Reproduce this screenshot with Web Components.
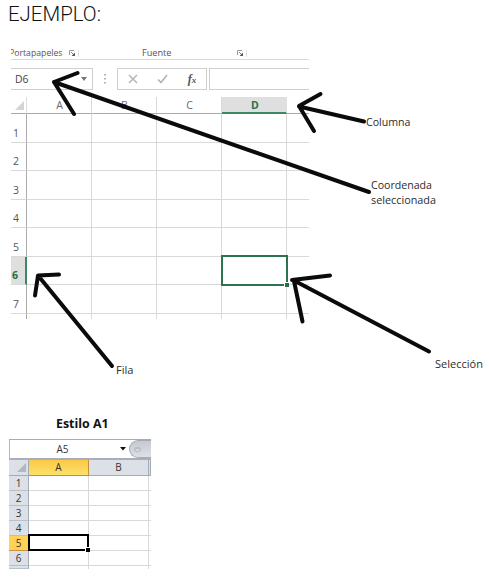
<!DOCTYPE html>
<html lang="es"><head><meta charset="utf-8"><title>Ejemplo</title>
<style>
html,body{margin:0;background:#fff}
body{width:489px;height:577px;overflow:hidden;position:relative;display:flex;flex-direction:column;align-items:flex-start;font-family:"Open Sans","Noto Sans",sans-serif}
page-title{margin:2px 0 0 8px}
sheet-modern{margin:20px 0 0 11px}
sheet-caption{margin:96px 0 0 56px}
sheet-classic{margin:7px 0 0 9px}
</style></head><body>
<page-title><fit-text w="93">EJEMPLO:</fit-text></page-title>
<sheet-modern cell="D6"></sheet-modern>
<sheet-caption><fit-text w="52.500">Estilo A1</fit-text></sheet-caption>
<sheet-classic cell="A5"></sheet-classic>
<arrow-layer>
<call-out style="left:366px;top:114px"><fit-text w="44.500">Columna</fit-text></call-out>
<call-out style="left:370.500px;top:177px"><fit-text w="61">Coordenada</fit-text><fit-text w="65">seleccionada</fit-text></call-out>
<call-out style="left:435px;top:356px"><fit-text w="48">Selección</fit-text></call-out>
<call-out style="left:116px;top:362px"><fit-text w="17.500">Fila</fit-text></call-out>
</arrow-layer>
<script>
const define=(name,render)=>customElements.define(name,class extends HTMLElement{
  connectedCallback(){ if(this.shadowRoot)return; this.attachShadow({mode:'open'}).innerHTML=render(this); }
});
define('page-title',()=>`<style>:host{display:block;height:25px;font:300 20.5px/25px Roboto,sans-serif;color:#111}</style><slot></slot>`);
define('sheet-caption',()=>`<style>:host{display:block;height:17px;font:700 12px/18px "Open Sans",sans-serif;color:#111}</style><slot></slot>`);
define('call-out',()=>`<style>:host{position:absolute;display:block;font:11.3px/15px "Open Sans",sans-serif;color:#2c2c2c}</style><slot></slot>`);
define('launcher-icon',()=>`<style>:host{display:block;width:10px;height:7px}svg{display:block}</style><svg width="10" height="7"><path d="M.5 5V.5H5" fill="none" stroke="#999"/><path d="M2 2l3 3" stroke="#888"/><path d="M6 2.500V6H2.500z" fill="#555"/><path d="M9.500 0v7" stroke="#ddd"/></svg>`);
define('ribbon-strip',()=>`<style>
:host{display:grid;grid-template-columns:58px 10px 63px 95px 72px;height:12px;align-items:center;border-bottom:1px solid #d9d9d9;font-size:9.2px;line-height:12px;color:#555}
.p{overflow:hidden;height:12px;width:52px}.p fit-text{margin-left:-2px}launcher-icon{margin-top:1px}</style>
<div class="p"><fit-text w="53.500">Portapapeles</fit-text></div><launcher-icon></launcher-icon><i></i><fit-text w="29.500">Fuente</fit-text><launcher-icon></launcher-icon>`);
define('formula-row',e=>`<style>
:host{display:grid;grid-template-columns:82px 24px 90px 2px 100px;height:22px;margin-top:8px}
div{box-sizing:border-box;border:1px solid #cfcfcf;display:flex;align-items:center}
.n{border-left:0;padding:0 5px 0 4px;justify-content:space-between;font-size:10.5px;color:#444}
.f{justify-content:space-around;padding:0}.v{border-right:0}
.d{border:0;justify-content:center}</style>
<div class="n"><fit-text w="13.500">${e.getAttribute('cell')}</fit-text><svg width="6" height="4"><path d="M0 0h6L3 4z" fill="#777"/></svg></div>
<div class="d"><svg width="2" height="10"><path d="M1 0v10" stroke="#999" stroke-width="1.500" stroke-dasharray="1.500 2.500"/></svg></div>
<div class="f"><svg width="10" height="10"><path d="M1 1l8 8M9 1l-8 8" stroke="#b5b5b5" stroke-width="1.500"/></svg><svg width="11" height="10"><path d="M1 5.500l3 3L10 1" fill="none" stroke="#b5b5b5" stroke-width="1.700"/></svg><span style="font:italic 700 12px/14px 'Liberation Serif',serif;color:#555">f<span style="font-size:9px">x</span></span></div><i></i><div class="v"></div>`);
define('sheet-modern',e=>{
  const heights=[29,28,29,28,29,28,29];
  const cols=['A','B','C','D',''];
  let h='<div class="c corner"><svg width="9" height="9"><path d="M9 0v9H0z" fill="#d4d4d4"/></svg></div>'+cols.map(c=>`<div class="c h ${c=='D'?'on':''} ${c?'':'last'}">${c}</div>`).join('');
  heights.forEach((_,r)=>{h+=`<div class="c r ${r==5?'ron':''}">${r+1}</div>`+cols.map(c=>`<div class="c ${c?'':'last'}">${r==5&&c=='D'?'<b class="sel"><i></i></b>':''}</div>`).join('')});
  h+='<div class="c r tail"></div>'+cols.map(c=>`<div class="c tail ${c?'':'last'}"></div>`).join('');
  return `<style>
:host{display:block;width:298px}
.g{display:grid;grid-template-columns:16px 65px 65px 65px 65px 22px;grid-template-rows:17px ${heights.map(x=>x+'px').join(' ')} 5px;margin-top:7px}
.c{box-sizing:border-box;border-right:1px solid #d9d9d9;border-bottom:1px solid #d9d9d9;position:relative;font-size:10.5px;line-height:16px;color:#666;min-width:0}
.last{border-right:0}
.corner,.r{border-right-color:#aaa}
.corner,.h{border-bottom-color:#aaa}
.corner{display:flex;justify-content:flex-end;align-items:flex-end;padding:0 2px 3px 0;border-right-color:#ddd}
.h{text-align:center;padding-left:1px}
.r{display:flex;align-items:center;padding:9px 0 0 2px;line-height:12px;color:#555}
.tail{border-bottom:0;padding:0}
.on{background:#dfdfdf;border-bottom:2px solid #3c8864;color:#217346;font-weight:700;line-height:16px;padding-left:2px;border-right-color:#dfdfdf}
.ron{background:#dfdfdf;border-right:2px solid #3c8864;color:#217346;font-weight:700;padding-left:1px}
.sel{position:absolute;left:-1px;top:-2px;width:63px;height:27px;border:2px solid #2c7450;z-index:1}
.sel i{position:absolute;left:61px;top:25px;width:4px;height:4px;background:#217346;border:solid #fff;border-width:1px 0 0 1px}
.c:has(.sel){z-index:1}
</style><ribbon-strip></ribbon-strip><formula-row cell="${e.getAttribute('cell')}"></formula-row><div class="g">${h}</div>`});
define('sheet-classic',e=>{
  let h='<div class="k"><svg width="9" height="9"><path d="M9 0v9H0z" fill="#b3b8bf"/></svg></div><div class="h on">A</div><div class="h">B</div><div class="h"></div>';
  for(let r=1;r<7;r++)h+=`<div class="r ${r==5?'ron':''}">${r}</div><div class="c">${r==5?'<b class="sel"><i></i></b>':''}</div><div class="c"></div><div class="c z"></div>`;
  h+='<div class="r"></div><div class="c t"></div><div class="c t"></div><div class="c z t"></div>';
  return `<style>
:host{display:block;width:142px;height:130px;font:10px/15px "Open Sans",sans-serif;color:#333}
.bar{display:grid;grid-template-columns:120px 22px;height:21px;box-sizing:border-box;border-top:1px solid #a7abb2;border-bottom:2px solid #a9aeb8;background:#fff}
.name{border-left:1px solid #b5b9bf;display:grid;grid-template-columns:105px 1fr;align-items:center;text-align:center}
.name svg{margin-left:4px}
.fx{background:linear-gradient(#c5c9d0,#dde0e5);border-radius:9px 0 0 9px;border:1px solid #a6abb3;border-right:0;display:flex;align-items:center;padding-left:3px}
.g{display:grid;grid-template-columns:20px 60px 60px 2px;grid-template-rows:16px repeat(6,15px) 3px}
.g>div{box-sizing:border-box;min-width:0;position:relative}
.k,.h,.r{background:#dce1e8;border-right:1px solid #a3abb7;border-bottom:1px solid #a3abb7;text-align:center}
.k{display:flex;justify-content:flex-end;align-items:flex-end;padding:0 2px 3px}
.h{line-height:15px}
.r{border-bottom-color:#b9c0ca}
.c{border-right:1px solid #d7dadd;border-bottom:1px solid #d7dadd}.z{border-right:0}.t{border-bottom:0}
.g>.on{background:linear-gradient(#fbca45,#fde06a);border-color:#c78d38}
.ron{background:#ffd257;border-color:#c79345}
.sel{position:absolute;left:-1px;top:-2px;width:57px;height:13px;border:2px solid #000}
.sel i{position:absolute;left:55px;top:11px;width:4px;height:4px;background:#000;border:solid #fff;border-width:1px 0 0 1px}
.g>.c:has(.sel){z-index:1}
</style><div class="bar"><div class="name"><span>${e.getAttribute('cell')}</span><svg width="7" height="4"><path d="M1 0h6L4 3.500z" fill="#111"/></svg></div><div class="fx"><svg width="9" height="7"><ellipse cx="4.500" cy="3.500" rx="3.500" ry="2.800" fill="#b9bdc4"/><path d="M2.500 4h4" stroke="#f4f4f4"/></svg></div></div><div class="g">${h}</div>`});
define('arrow-layer',()=>`<style>:host{position:absolute;left:0;top:0;width:489px;height:577px;z-index:2}svg{position:absolute;left:0;top:0}</style>
<svg width="489" height="577" fill="none" stroke="#0b0b0b" stroke-width="4" stroke-linecap="round" stroke-linejoin="round">
<path d="M369 192L54 82M77.500 73L54 82l20 32"/><path d="M364 121.500L299 106.500M320.500 94L299 106l15 25"/>
<path d="M112 366L38 275.500M59 274.500l-21 1-3 20"/><path d="M429 351.500L293 280M330 275.500l-38 4.500M294 281l8.500 40.500"/></svg><slot></slot>`);
// Text squeezed or stretched to a fixed width; registered last so that its host's font already applies when it measures
customElements.define('fit-text',class extends HTMLElement{
  connectedCallback(){
    if(this.shadowRoot)return;
    this.attachShadow({mode:'open'}).innerHTML='<style>:host{display:block;white-space:nowrap}span{display:inline-block;transform-origin:0 50%}</style><span><slot></slot></span>';
    const s=this.shadowRoot.querySelector('span'),w=+this.getAttribute('w');
    this.style.width=w+'px';
    s.style.transform='scaleX('+w/s.getBoundingClientRect().width+')';
  }
});
</script></body></html>
